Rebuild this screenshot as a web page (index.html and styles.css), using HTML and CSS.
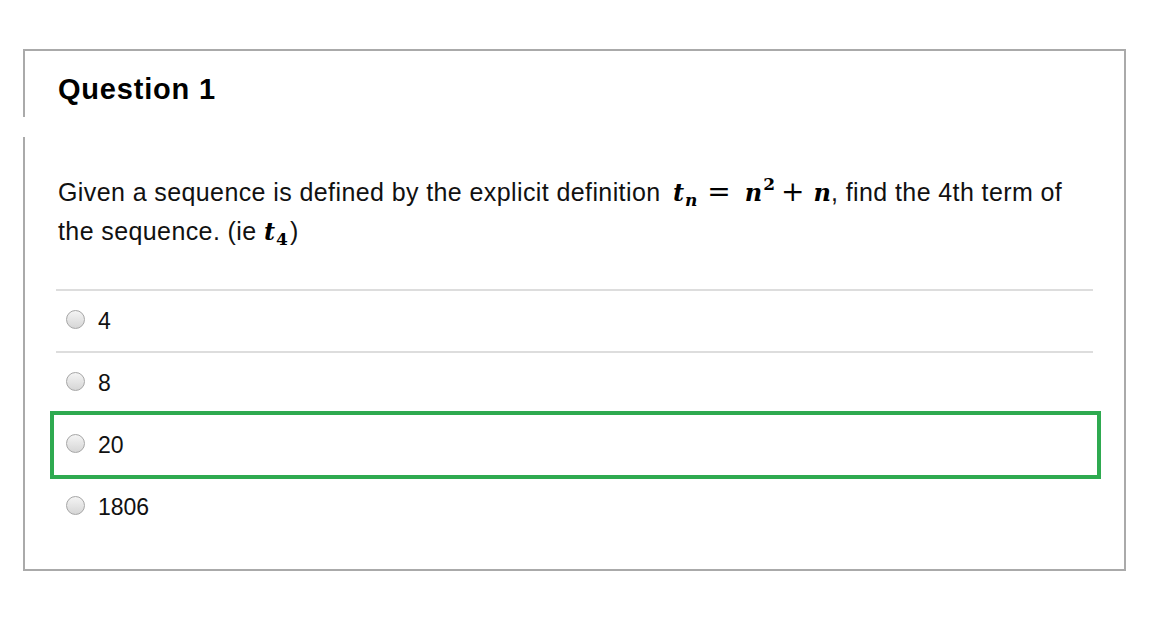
FILE: index.html
```html
<!DOCTYPE html>
<html>
<head>
<meta charset="utf-8">
<link rel="stylesheet" href="styles.css">
</head>
<body>
<div class="card">
  <div class="card-head">
    <h2 class="q-title">Question 1</h2>
  </div>
  <div class="card-body">
    <p class="q-text">Given a sequence is defined by the explicit definition <span class="math math-wide"><span class="mi">t</span><sub class="msub">n</sub><span class="mo eq">=</span><span class="mi">n</span><sup class="msup">2</sup><span class="mo plus">+</span><span class="mi">n</span></span>, find the 4th term of the sequence. (ie <span class="math"><span class="mi">t</span><sub class="msub num">4</sub></span>)</p>
    <div class="answers">
      <label class="answer"><span class="radio"></span><span class="answer-text">4</span></label>
      <label class="answer"><span class="radio"></span><span class="answer-text">8</span></label>
      <label class="answer correct"><span class="radio"></span><span class="answer-text">20</span></label>
      <label class="answer"><span class="radio"></span><span class="answer-text">1806</span></label>
    </div>
  </div>
</div>
</body>
</html>
```
FILE: styles.css
```css
html, body {
  margin: 0;
  padding: 0;
  background: #fff;
}
body {
  font-family: "Liberation Sans", Arial, sans-serif;
  color: #111;
  padding: 49px 0 0 23px;
}
.card {
  width: 1101px;
  border-top: 2px solid #aaa;
  border-right: 2px solid #aaa;
  border-bottom: 2px solid #aaa;
}
.card-head {
  border-left: 2px solid #aaa;
  height: 66px;
  padding-left: 33px;
}
.q-title {
  margin: 0;
  padding-top: 21px;
  font-size: 29px;
  letter-spacing: 0.8px;
  font-weight: bold;
  line-height: 34px;
  color: #000;
}
.card-body {
  margin-top: 20px;
  border-left: 2px solid #aaa;
  padding: 36px 31px 32px 31px;
}
.q-text {
  margin: 0 0 0 2px;
  font-size: 25px;
  letter-spacing: 0.4px;
  line-height: 39px;
  color: #111;
}
.math {
  font-family: "DejaVu Serif", "Liberation Serif", serif;
  font-weight: bold;
  font-style: italic;
  font-size: 24px;
  letter-spacing: 0;
  white-space: nowrap;
  line-height: 0;
  color: #000;
  margin-right: 1px;
}
.math-wide {
  margin-left: 5px;
  margin-right: 0;
}
.msub {
  font-size: 17px;
  vertical-align: -5px;
  line-height: 0;
  margin-left: 1px;
  margin-right: 1px;
}
.msub.num {
  font-style: normal;
}
.msup {
  font-size: 17px;
  font-style: normal;
  vertical-align: 11px;
  line-height: 0;
  margin-left: 1px;
}
.mo {
  font-style: normal;
  font-weight: normal;
  font-family: "DejaVu Serif", serif;
  font-size: 28px;
}
.eq { margin: 0 14px 0 9px; }
.plus { margin: 0 9px 0 6px; }
.answers {
  margin-top: 38px;
  width: 1037px;
  margin-left: 0;
}
.answer {
  position: relative;
  display: flex;
  align-items: center;
  height: 60px;
  border-top: 2px solid #ddd;
  padding-left: 10px;
}
.answer + .answer + .answer + .answer {
  border-top-color: transparent;
}
.answer.correct::after {
  content: "";
  position: absolute;
  top: -4px;
  bottom: -4px;
  left: -6px;
  right: -8px;
  border: 4px solid #2eaa50;
  z-index: 1;
}
.radio {
  width: 17px;
  height: 17px;
  border-radius: 50%;
  border: 1px solid #a6a6a6;
  background: linear-gradient(#f4f4f4, #d6d6d6);
  box-sizing: content-box;
  margin-top: -3px;
}
.answer-text {
  margin-left: 13px;
  font-size: 23px;
  color: #111;
}
```
